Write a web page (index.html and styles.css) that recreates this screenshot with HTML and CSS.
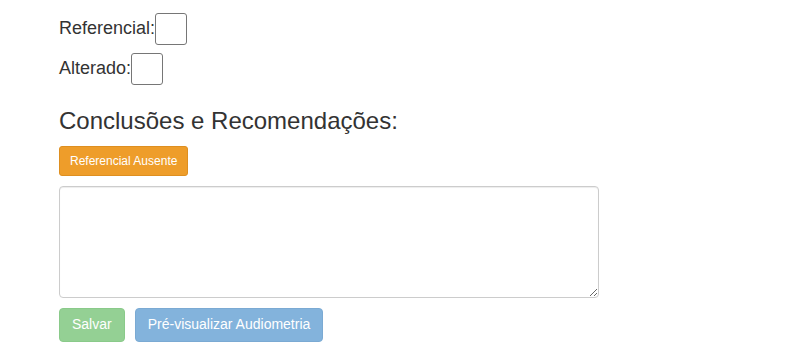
FILE: index.html
```html
<!DOCTYPE html>
<html lang="pt-BR">
<head>
    <meta charset="UTF-8">
    <meta name="viewport" content="width=device-width, initial-scale=1.0">
    <title>Audiometria</title>
    <link rel="stylesheet" href="styles.css">
</head>
<body>
    <div class="container">
        <div class="campo">
            <label for="referencial">Referencial:</label>
            <input type="text" id="referencial" class="caixa">
        </div>
        <div class="campo">
            <label for="alterado">Alterado:</label>
            <input type="text" id="alterado" class="caixa">
        </div>

        <h3>Conclusões e Recomendações:</h3>
        <button type="button" class="btn btn-sm btn-warning">Referencial Ausente</button>

        <textarea class="conclusao" id="conclusao"></textarea>

        <div class="acoes">
            <button type="button" class="btn btn-success" disabled>Salvar</button>
            <button type="button" class="btn btn-primary" disabled>Pré-visualizar Audiometria</button>
        </div>
    </div>
</body>
</html>
```

FILE: styles.css
```css
body {
    font-family: 'Liberation Sans', Arial, sans-serif;
    font-size: 14px;
    line-height: 1.42857;
    margin: 0;
    color: #333;
    background: #fff;
}
.container {
    padding: 13px 0 0 59px;
}
.campo {
    display: flex;
    align-items: center;
    height: 32px;
    margin-bottom: 8px;
    font-size: 18px;
}
.campo label {
    font-weight: normal;
}
.caixa {
    box-sizing: border-box;
    width: 32px;
    height: 32px;
    margin: 0;
    padding: 0;
    border: 1px solid #767676;
    border-radius: 3px;
}
h3 {
    font-size: 24px;
    font-weight: 500;
    line-height: 1.1;
    margin: 23px 0 12px;
}
.btn {
    display: inline-block;
    box-sizing: border-box;
    font-family: inherit;
    font-size: 14px;
    line-height: 1.42857;
    padding: 6px 12px;
    border: 1px solid transparent;
    border-radius: 4px;
    color: #fff;
    cursor: pointer;
}
.btn-sm {
    font-size: 12px;
    line-height: 1.5;
    padding: 5px 10px;
    border-radius: 3px;
}
.btn-warning {
    background-color: #ee9d2a;
    border-color: #de8f20;
}
.btn-success {
    background-color: #5cb85c;
    border-color: #4cae4c;
}
.btn-primary {
    background-color: #428bca;
    border-color: #357ebd;
}
.btn[disabled] {
    opacity: .65;
    cursor: not-allowed;
}
.conclusao {
    display: block;
    box-sizing: border-box;
    width: 540px;
    height: 112px;
    margin: 10px 0;
    padding: 6px 12px;
    border: 1px solid #ccc;
    border-radius: 4px;
    box-shadow: inset 0 1px 1px rgba(0,0,0,.075);
    font-family: inherit;
    font-size: 14px;
}
.acoes {
    display: flex;
    gap: 10px;
}
```
